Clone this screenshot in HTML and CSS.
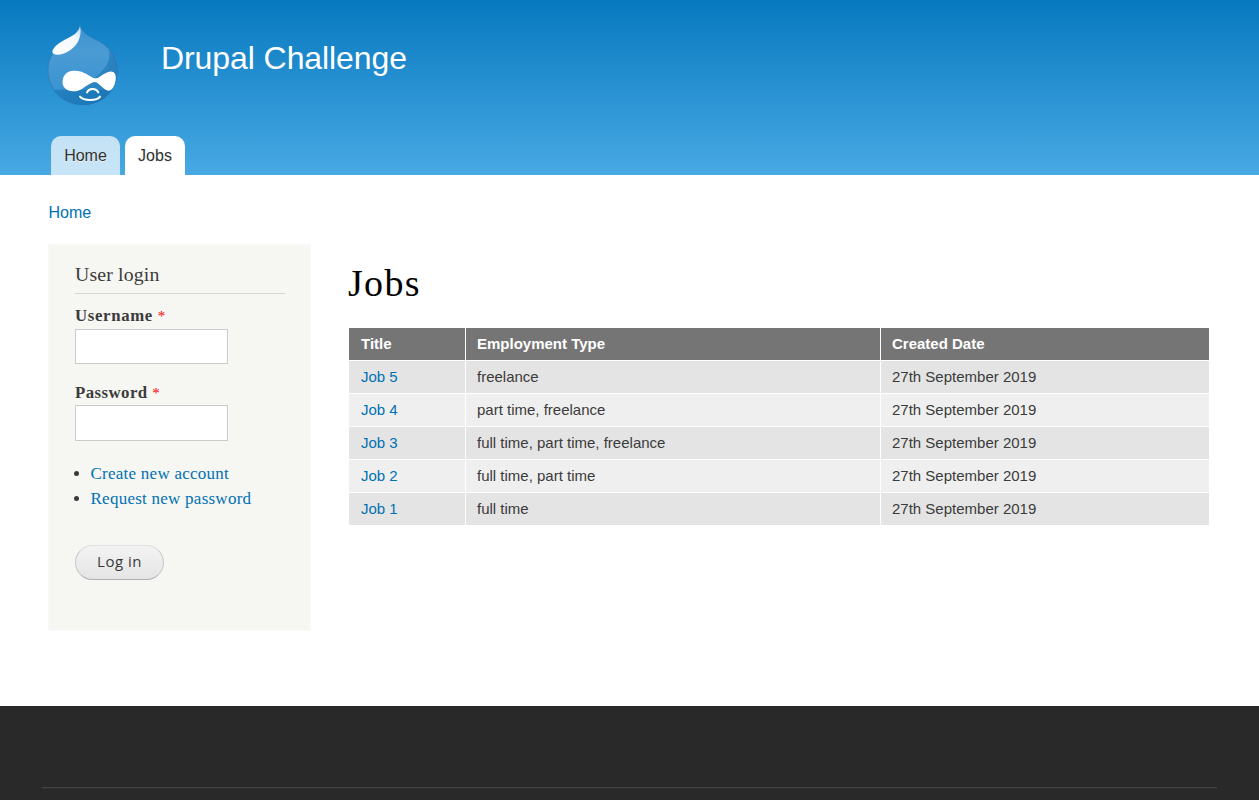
FILE: index.html
```html
<!DOCTYPE html>
<html lang="en">
<head>
<meta charset="utf-8">
<title>Jobs | Drupal Challenge</title>
<link rel="stylesheet" href="styles.css">
</head>
<body>
<header class="header">
  <div class="branding">
    <svg class="logo" viewBox="0 0 300 300" aria-hidden="true">
      <defs>
        <linearGradient id="drop" x1="0" y1="0" x2="0" y2="1">
          <stop offset="0" stop-color="#3b93cf"/><stop offset=".35" stop-color="#4a9bd4"/><stop offset="1" stop-color="#3490d0"/>
        </linearGradient>
        <linearGradient id="shine" x1="1" y1="0" x2="0" y2="1">
          <stop offset="0" stop-color="#b5d7ee"/><stop offset=".3" stop-color="#f4f9fd"/><stop offset="1" stop-color="#fff"/>
        </linearGradient>
        <linearGradient id="shade" x1="0" y1="0" x2="1" y2="0">
          <stop offset="0" stop-color="#0d6eaf" stop-opacity=".1"/><stop offset="1" stop-color="#0b66a5" stop-opacity=".5"/>
        </linearGradient>
        <clipPath id="body"><path d="M132 30C137 49 154 62 176 72C218 91 245 124 245 167C245 226 199 270 141 270C80 270 35 222 35 166C35 126 58 97 91 77C112 65 131 55 132 30Z"/></clipPath>
      </defs>
      <g clip-path="url(#body)">
        <rect x="30" y="25" width="220" height="250" fill="url(#drop)"/>
        <path d="M217 95C230 135 206 170 166 193C145 206 120 224 35 225V280H250V95Z" fill="url(#shade)"/>
        <path d="M35 225H245V275H35Z" fill="#0b68a7" opacity=".38"/>
      </g>
      <path d="M132 31C137 49 154 62 176 72C218 91 244 124 244 167C244 226 199 269 141 269C80 269 36 222 36 166C36 126 58 97 91 77C112 65 131 55 132 31Z" fill="none" stroke="#2675ad" stroke-width="3" opacity=".65"/>
      <path d="M132 32C129 48 118 58 98 68C70 82 50 96 49 111C51 122 75 121 93 111C120 97 133 76 134 48Z" fill="url(#shine)"/>
      <path d="M111 167C80 169 75 201 84 216C94 232 123 232 139 221C156 210 167 201 177 201C190 202 203 228 219 227C235 225 244 190 237 176C230 165 217 169 205 176C194 182 188 190 178 190C163 188 145 165 111 167Z" fill="#fff"/>
      <path d="M153 232C159 220 180 218 187 232M132 245C144 259 183 258 192 245" fill="none" stroke="#fff" stroke-width="6" stroke-linecap="round"/>
    </svg>
    <div class="site-name">Drupal Challenge</div>
  </div>
  <nav class="tabs">
    <a class="tab">Home</a>
    <a class="tab tab-active">Jobs</a>
  </nav>
</header>
<div class="breadcrumb"><a>Home</a></div>
<div class="main">
  <aside class="sidebar">
    <h2 class="block-title">User login</h2>
    <form>
      <label class="label" for="name">Username <span class="required">*</span></label>
      <input class="field" id="name" type="text">
      <label class="label label-password" for="pass">Password <span class="required">*</span></label>
      <input class="field field-password" id="pass" type="password">
      <ul class="links">
        <li><a>Create new account</a></li>
        <li><a>Request new password</a></li>
      </ul>
      <button class="button" type="button">Log in</button>
    </form>
  </aside>
  <main class="content">
    <h1 class="page-title">Jobs</h1>
    <table class="jobs">
      <colgroup><col class="col-title"><col class="col-type"><col></colgroup>
      <thead><tr><th>Title</th><th>Employment Type</th><th>Created Date</th></tr></thead>
      <tbody>
        <tr><td><a>Job 5</a></td><td>freelance</td><td>27th September 2019</td></tr>
        <tr><td><a>Job 4</a></td><td>part time, freelance</td><td>27th September 2019</td></tr>
        <tr><td><a>Job 3</a></td><td>full time, part time, freelance</td><td>27th September 2019</td></tr>
        <tr><td><a>Job 2</a></td><td>full time, part time</td><td>27th September 2019</td></tr>
        <tr><td><a>Job 1</a></td><td>full time</td><td>27th September 2019</td></tr>
      </tbody>
    </table>
  </main>
</div>
<footer class="footer"><div class="footer-rule"></div></footer>
</body>
</html>
```
FILE: styles.css
```css
* { box-sizing: border-box; }
body {
  margin: 0;
  height: 800px;
  overflow: hidden;
  display: flex;
  flex-direction: column;
  background: #fff;
  color: #3b3b3b;
  font: 16px/24px "Liberation Sans", Arial, sans-serif;
}
a { color: #0071b3; }
.header {
  height: 175px;
  flex: none;
  display: flex;
  flex-direction: column;
  justify-content: space-between;
  background: linear-gradient(#0779bf, #48a9e4);
}
.branding { display: flex; padding: 15px 0 0 36px; }
.logo { width: 100px; height: 100px; }
.site-name { margin: 23px 0 0 25px; color: #fff; font-size: 32px; line-height: 40px; letter-spacing: -.08px; }
.tabs { display: flex; gap: 5px; padding-left: 51px; }
.tab {
  height: 39px;
  width: 69px;
  border-radius: 10px 10px 0 0;
  background: rgba(255, 255, 255, .7);
  color: #333;
  line-height: 39px;
  text-align: center;
  text-shadow: 0 1px #eee;
}
.tab-active { width: 60px; background: #fff; }
.breadcrumb { height: 69px; flex: none; padding: 26px 0 0 48.5px; }
.main { height: 462px; flex: none; display: flex; gap: 37px; padding-left: 48px; align-items: flex-start; }
.sidebar {
  width: 263px;
  height: 387px;
  padding: 16px 25px 16px 26px;
  border: 1px solid #f9f9f9;
  background: #f6f6f2;
  font-family: "Liberation Serif", Georgia, serif;
}
.block-title {
  height: 33px;
  margin: 0 0 10px;
  border-bottom: 1px solid #d6d6d6;
  font-size: 19.8px;
  font-weight: 400;
  line-height: 27px;
  letter-spacing: .15px;
}
.label { display: block; height: 25px; font-size: 16.8px; font-weight: 700; line-height: 24px; letter-spacing: .65px; }
.label-password { height: 24px; margin-top: 17px; letter-spacing: .45px; }
.required { color: #f00; font-weight: 400; font-size: 15px; letter-spacing: 0; }
.field { display: block; width: 153px; height: 35px; border: 1px solid #ccc; background: #fff; }
.field-password { height: 36px; }
.links { margin: 20px 0 34px; padding-left: 15.5px; font-size: 17px; line-height: 25px; letter-spacing: .25px; }
.button {
  display: block;
  width: 89px;
  height: 35px;
  padding: 0 0 3px;
  border: 1px solid #ccc;
  border-color: #e0e0e0 #c8c8c8 #b0b0b0;
  border-radius: 18px;
  background: linear-gradient(#f3f3f3, #e5e5e5);
  color: #3a3a3a;
  font: 15px "Open Sans", sans-serif;
  letter-spacing: .5px;
}
.content { width: 862px; }
.page-title { margin: 15px 0 21px; color: #000; font: 38px/48px "Liberation Serif", Georgia, serif; letter-spacing: 1.3px; }
.jobs { width: 862px; table-layout: fixed; border-collapse: separate; border-spacing: 0; margin-top: -1px; font-size: 15px; padding-left: 1px; }
.col-title { width: 117px; }
.col-type { width: 415px; }
.jobs th, .jobs td { height: 33px; padding: 0 11px 0; border: solid #fff; border-width: 1px 1px 0 0; line-height: 32px; text-align: left; }
.jobs th:first-child, .jobs td:first-child { padding-left: 12px; }
.jobs th { background: #757575; color: #fff; }
.jobs td { background: #efefef; }
.jobs tr:nth-child(odd) td { background: #e4e4e4; }
.footer { height: 94px; flex: none; padding: 81px 42px 0; background: #292929; }
.footer-rule { height: 2px; border-top: 1px solid #444; background: #303030; }
```
